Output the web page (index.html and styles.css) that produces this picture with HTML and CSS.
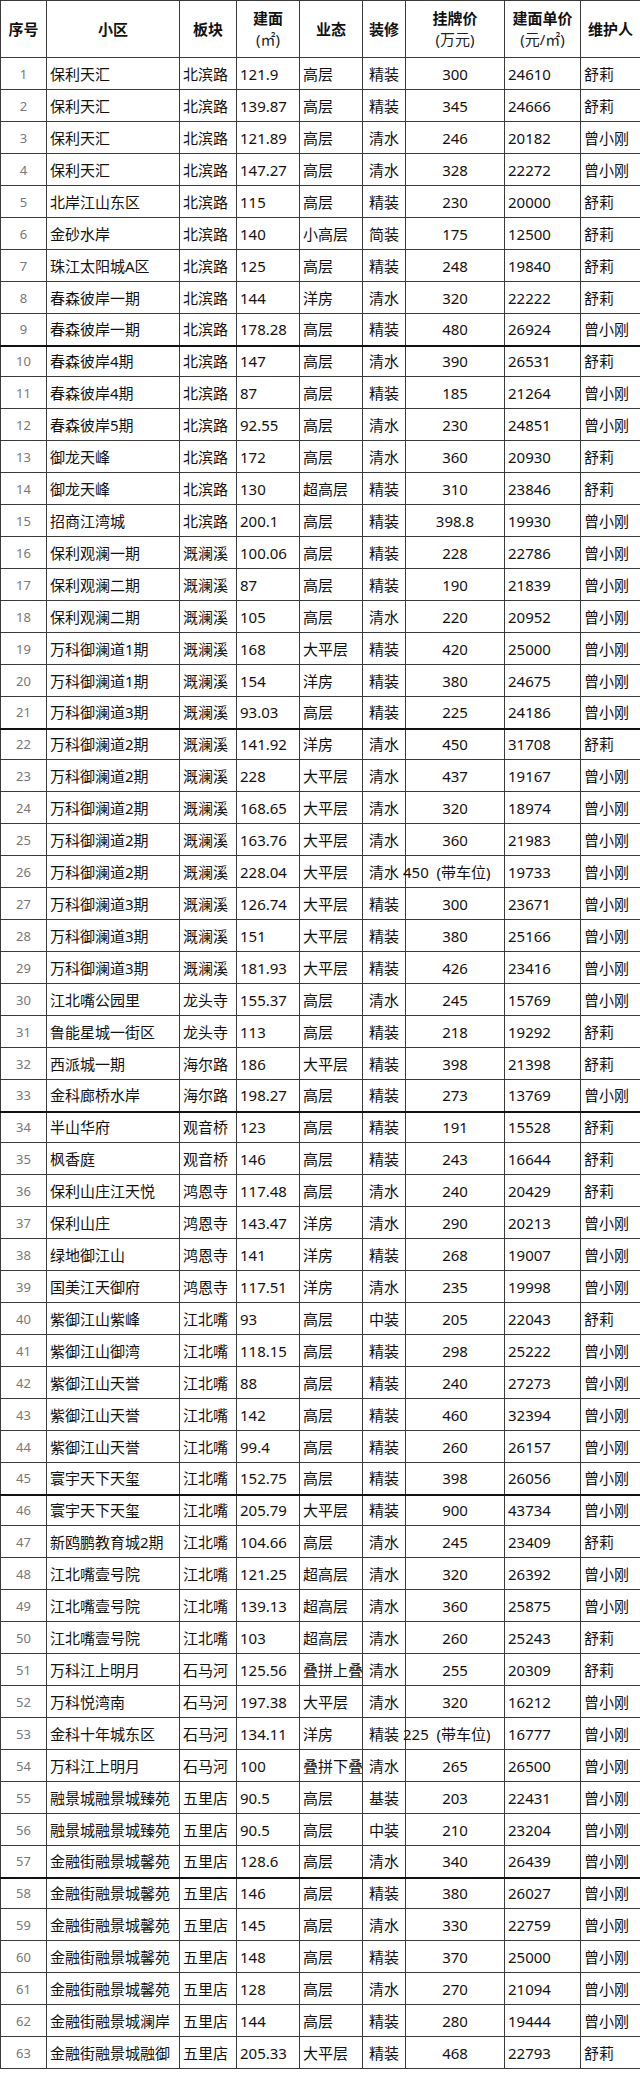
FILE: index.html
```html
<!DOCTYPE html>
<html lang="zh-CN">
<head>
<meta charset="utf-8">
<title>房源表</title>
<link rel="stylesheet" href="styles.css">
</head>
<body>
<table class="sheet">
<colgroup>
<col class="c-no"><col class="c-name"><col class="c-area"><col class="c-size"><col class="c-type"><col class="c-deco"><col class="c-price"><col class="c-unit"><col class="c-agent">
</colgroup>
<thead>
<tr class="head">
<th>序号</th><th>小区</th><th>板块</th>
<th><span class="h1">建面</span><span class="h2">(㎡)</span></th>
<th>业态</th><th>装修</th>
<th><span class="h1">挂牌价</span><span class="h2">(万元)</span></th>
<th><span class="h1">建面单价</span><span class="h2">(元/㎡)</span></th>
<th>维护人</th>
</tr>
</thead>
<tbody>
<tr><td class="no">1</td><td>保利天汇</td><td>北滨路</td><td>121.9</td><td>高层</td><td class="ctr">精装</td><td class="ctr">300</td><td>24610</td><td>舒莉</td></tr>
<tr><td class="no">2</td><td>保利天汇</td><td>北滨路</td><td>139.87</td><td>高层</td><td class="ctr">精装</td><td class="ctr">345</td><td>24666</td><td>舒莉</td></tr>
<tr><td class="no">3</td><td>保利天汇</td><td>北滨路</td><td>121.89</td><td>高层</td><td class="ctr">清水</td><td class="ctr">246</td><td>20182</td><td>曾小刚</td></tr>
<tr><td class="no">4</td><td>保利天汇</td><td>北滨路</td><td>147.27</td><td>高层</td><td class="ctr">清水</td><td class="ctr">328</td><td>22272</td><td>曾小刚</td></tr>
<tr><td class="no">5</td><td>北岸江山东区</td><td>北滨路</td><td>115</td><td>高层</td><td class="ctr">精装</td><td class="ctr">230</td><td>20000</td><td>舒莉</td></tr>
<tr><td class="no">6</td><td>金砂水岸</td><td>北滨路</td><td>140</td><td>小高层</td><td class="ctr">简装</td><td class="ctr">175</td><td>12500</td><td>舒莉</td></tr>
<tr><td class="no">7</td><td>珠江太阳城A区</td><td>北滨路</td><td>125</td><td>高层</td><td class="ctr">精装</td><td class="ctr">248</td><td>19840</td><td>舒莉</td></tr>
<tr><td class="no">8</td><td>春森彼岸一期</td><td>北滨路</td><td>144</td><td>洋房</td><td class="ctr">清水</td><td class="ctr">320</td><td>22222</td><td>舒莉</td></tr>
<tr><td class="no">9</td><td>春森彼岸一期</td><td>北滨路</td><td>178.28</td><td>高层</td><td class="ctr">精装</td><td class="ctr">480</td><td>26924</td><td>曾小刚</td></tr>
<tr class="pb"><td class="no">10</td><td>春森彼岸4期</td><td>北滨路</td><td>147</td><td>高层</td><td class="ctr">清水</td><td class="ctr">390</td><td>26531</td><td>舒莉</td></tr>
<tr><td class="no">11</td><td>春森彼岸4期</td><td>北滨路</td><td>87</td><td>高层</td><td class="ctr">精装</td><td class="ctr">185</td><td>21264</td><td>曾小刚</td></tr>
<tr><td class="no">12</td><td>春森彼岸5期</td><td>北滨路</td><td>92.55</td><td>高层</td><td class="ctr">清水</td><td class="ctr">230</td><td>24851</td><td>曾小刚</td></tr>
<tr><td class="no">13</td><td>御龙天峰</td><td>北滨路</td><td>172</td><td>高层</td><td class="ctr">清水</td><td class="ctr">360</td><td>20930</td><td>舒莉</td></tr>
<tr><td class="no">14</td><td>御龙天峰</td><td>北滨路</td><td>130</td><td>超高层</td><td class="ctr">精装</td><td class="ctr">310</td><td>23846</td><td>舒莉</td></tr>
<tr><td class="no">15</td><td>招商江湾城</td><td>北滨路</td><td>200.1</td><td>高层</td><td class="ctr">精装</td><td class="ctr">398.8</td><td>19930</td><td>曾小刚</td></tr>
<tr><td class="no">16</td><td>保利观澜一期</td><td>溉澜溪</td><td>100.06</td><td>高层</td><td class="ctr">精装</td><td class="ctr">228</td><td>22786</td><td>曾小刚</td></tr>
<tr><td class="no">17</td><td>保利观澜二期</td><td>溉澜溪</td><td>87</td><td>高层</td><td class="ctr">精装</td><td class="ctr">190</td><td>21839</td><td>曾小刚</td></tr>
<tr><td class="no">18</td><td>保利观澜二期</td><td>溉澜溪</td><td>105</td><td>高层</td><td class="ctr">清水</td><td class="ctr">220</td><td>20952</td><td>曾小刚</td></tr>
<tr><td class="no">19</td><td>万科御澜道1期</td><td>溉澜溪</td><td>168</td><td>大平层</td><td class="ctr">精装</td><td class="ctr">420</td><td>25000</td><td>曾小刚</td></tr>
<tr><td class="no">20</td><td>万科御澜道1期</td><td>溉澜溪</td><td>154</td><td>洋房</td><td class="ctr">精装</td><td class="ctr">380</td><td>24675</td><td>曾小刚</td></tr>
<tr><td class="no">21</td><td>万科御澜道3期</td><td>溉澜溪</td><td>93.03</td><td>高层</td><td class="ctr">精装</td><td class="ctr">225</td><td>24186</td><td>曾小刚</td></tr>
<tr class="pb"><td class="no">22</td><td>万科御澜道2期</td><td>溉澜溪</td><td>141.92</td><td>洋房</td><td class="ctr">清水</td><td class="ctr">450</td><td>31708</td><td>舒莉</td></tr>
<tr><td class="no">23</td><td>万科御澜道2期</td><td>溉澜溪</td><td>228</td><td>大平层</td><td class="ctr">清水</td><td class="ctr">437</td><td>19167</td><td>曾小刚</td></tr>
<tr><td class="no">24</td><td>万科御澜道2期</td><td>溉澜溪</td><td>168.65</td><td>大平层</td><td class="ctr">清水</td><td class="ctr">320</td><td>18974</td><td>曾小刚</td></tr>
<tr><td class="no">25</td><td>万科御澜道2期</td><td>溉澜溪</td><td>163.76</td><td>大平层</td><td class="ctr">清水</td><td class="ctr">360</td><td>21983</td><td>曾小刚</td></tr>
<tr><td class="no">26</td><td>万科御澜道2期</td><td>溉澜溪</td><td>228.04</td><td>大平层</td><td class="ctr">清水</td><td class="spill">450&nbsp;&nbsp;(带车位)</td><td>19733</td><td>曾小刚</td></tr>
<tr><td class="no">27</td><td>万科御澜道3期</td><td>溉澜溪</td><td>126.74</td><td>大平层</td><td class="ctr">精装</td><td class="ctr">300</td><td>23671</td><td>曾小刚</td></tr>
<tr><td class="no">28</td><td>万科御澜道3期</td><td>溉澜溪</td><td>151</td><td>大平层</td><td class="ctr">精装</td><td class="ctr">380</td><td>25166</td><td>曾小刚</td></tr>
<tr><td class="no">29</td><td>万科御澜道3期</td><td>溉澜溪</td><td>181.93</td><td>大平层</td><td class="ctr">精装</td><td class="ctr">426</td><td>23416</td><td>曾小刚</td></tr>
<tr><td class="no">30</td><td>江北嘴公园里</td><td>龙头寺</td><td>155.37</td><td>高层</td><td class="ctr">清水</td><td class="ctr">245</td><td>15769</td><td>曾小刚</td></tr>
<tr><td class="no">31</td><td>鲁能星城一街区</td><td>龙头寺</td><td>113</td><td>高层</td><td class="ctr">精装</td><td class="ctr">218</td><td>19292</td><td>舒莉</td></tr>
<tr><td class="no">32</td><td>西派城一期</td><td>海尔路</td><td>186</td><td>大平层</td><td class="ctr">精装</td><td class="ctr">398</td><td>21398</td><td>舒莉</td></tr>
<tr><td class="no">33</td><td>金科廊桥水岸</td><td>海尔路</td><td>198.27</td><td>高层</td><td class="ctr">精装</td><td class="ctr">273</td><td>13769</td><td>曾小刚</td></tr>
<tr class="pb"><td class="no">34</td><td>半山华府</td><td>观音桥</td><td>123</td><td>高层</td><td class="ctr">精装</td><td class="ctr">191</td><td>15528</td><td>舒莉</td></tr>
<tr><td class="no">35</td><td>枫香庭</td><td>观音桥</td><td>146</td><td>高层</td><td class="ctr">精装</td><td class="ctr">243</td><td>16644</td><td>舒莉</td></tr>
<tr><td class="no">36</td><td>保利山庄江天悦</td><td>鸿恩寺</td><td>117.48</td><td>高层</td><td class="ctr">清水</td><td class="ctr">240</td><td>20429</td><td>舒莉</td></tr>
<tr><td class="no">37</td><td>保利山庄</td><td>鸿恩寺</td><td>143.47</td><td>洋房</td><td class="ctr">清水</td><td class="ctr">290</td><td>20213</td><td>曾小刚</td></tr>
<tr><td class="no">38</td><td>绿地御江山</td><td>鸿恩寺</td><td>141</td><td>洋房</td><td class="ctr">精装</td><td class="ctr">268</td><td>19007</td><td>曾小刚</td></tr>
<tr><td class="no">39</td><td>国美江天御府</td><td>鸿恩寺</td><td>117.51</td><td>洋房</td><td class="ctr">清水</td><td class="ctr">235</td><td>19998</td><td>曾小刚</td></tr>
<tr><td class="no">40</td><td>紫御江山紫峰</td><td>江北嘴</td><td>93</td><td>高层</td><td class="ctr">中装</td><td class="ctr">205</td><td>22043</td><td>舒莉</td></tr>
<tr><td class="no">41</td><td>紫御江山御湾</td><td>江北嘴</td><td>118.15</td><td>高层</td><td class="ctr">精装</td><td class="ctr">298</td><td>25222</td><td>曾小刚</td></tr>
<tr><td class="no">42</td><td>紫御江山天誉</td><td>江北嘴</td><td>88</td><td>高层</td><td class="ctr">精装</td><td class="ctr">240</td><td>27273</td><td>曾小刚</td></tr>
<tr><td class="no">43</td><td>紫御江山天誉</td><td>江北嘴</td><td>142</td><td>高层</td><td class="ctr">精装</td><td class="ctr">460</td><td>32394</td><td>曾小刚</td></tr>
<tr><td class="no">44</td><td>紫御江山天誉</td><td>江北嘴</td><td>99.4</td><td>高层</td><td class="ctr">精装</td><td class="ctr">260</td><td>26157</td><td>曾小刚</td></tr>
<tr><td class="no">45</td><td>寰宇天下天玺</td><td>江北嘴</td><td>152.75</td><td>高层</td><td class="ctr">精装</td><td class="ctr">398</td><td>26056</td><td>曾小刚</td></tr>
<tr class="pb"><td class="no">46</td><td>寰宇天下天玺</td><td>江北嘴</td><td>205.79</td><td>大平层</td><td class="ctr">精装</td><td class="ctr">900</td><td>43734</td><td>曾小刚</td></tr>
<tr><td class="no">47</td><td>新鸥鹏教育城2期</td><td>江北嘴</td><td>104.66</td><td>高层</td><td class="ctr">清水</td><td class="ctr">245</td><td>23409</td><td>舒莉</td></tr>
<tr><td class="no">48</td><td>江北嘴壹号院</td><td>江北嘴</td><td>121.25</td><td>超高层</td><td class="ctr">清水</td><td class="ctr">320</td><td>26392</td><td>曾小刚</td></tr>
<tr><td class="no">49</td><td>江北嘴壹号院</td><td>江北嘴</td><td>139.13</td><td>超高层</td><td class="ctr">清水</td><td class="ctr">360</td><td>25875</td><td>曾小刚</td></tr>
<tr><td class="no">50</td><td>江北嘴壹号院</td><td>江北嘴</td><td>103</td><td>超高层</td><td class="ctr">清水</td><td class="ctr">260</td><td>25243</td><td>舒莉</td></tr>
<tr><td class="no">51</td><td>万科江上明月</td><td>石马河</td><td>125.56</td><td>叠拼上叠</td><td class="ctr">清水</td><td class="ctr">255</td><td>20309</td><td>舒莉</td></tr>
<tr><td class="no">52</td><td>万科悦湾南</td><td>石马河</td><td>197.38</td><td>大平层</td><td class="ctr">清水</td><td class="ctr">320</td><td>16212</td><td>曾小刚</td></tr>
<tr><td class="no">53</td><td>金科十年城东区</td><td>石马河</td><td>134.11</td><td>洋房</td><td class="ctr">精装</td><td class="spill">225&nbsp;&nbsp;(带车位)</td><td>16777</td><td>曾小刚</td></tr>
<tr><td class="no">54</td><td>万科江上明月</td><td>石马河</td><td>100</td><td>叠拼下叠</td><td class="ctr">清水</td><td class="ctr">265</td><td>26500</td><td>曾小刚</td></tr>
<tr><td class="no">55</td><td>融景城融景城臻苑</td><td>五里店</td><td>90.5</td><td>高层</td><td class="ctr">基装</td><td class="ctr">203</td><td>22431</td><td>曾小刚</td></tr>
<tr><td class="no">56</td><td>融景城融景城臻苑</td><td>五里店</td><td>90.5</td><td>高层</td><td class="ctr">中装</td><td class="ctr">210</td><td>23204</td><td>曾小刚</td></tr>
<tr><td class="no">57</td><td>金融街融景城馨苑</td><td>五里店</td><td>128.6</td><td>高层</td><td class="ctr">清水</td><td class="ctr">340</td><td>26439</td><td>曾小刚</td></tr>
<tr class="pb"><td class="no">58</td><td>金融街融景城馨苑</td><td>五里店</td><td>146</td><td>高层</td><td class="ctr">精装</td><td class="ctr">380</td><td>26027</td><td>曾小刚</td></tr>
<tr><td class="no">59</td><td>金融街融景城馨苑</td><td>五里店</td><td>145</td><td>高层</td><td class="ctr">清水</td><td class="ctr">330</td><td>22759</td><td>曾小刚</td></tr>
<tr><td class="no">60</td><td>金融街融景城馨苑</td><td>五里店</td><td>148</td><td>高层</td><td class="ctr">精装</td><td class="ctr">370</td><td>25000</td><td>曾小刚</td></tr>
<tr><td class="no">61</td><td>金融街融景城馨苑</td><td>五里店</td><td>128</td><td>高层</td><td class="ctr">清水</td><td class="ctr">270</td><td>21094</td><td>曾小刚</td></tr>
<tr><td class="no">62</td><td>金融街融景城澜岸</td><td>五里店</td><td>144</td><td>高层</td><td class="ctr">精装</td><td class="ctr">280</td><td>19444</td><td>曾小刚</td></tr>
<tr><td class="no">63</td><td>金融街融景城融御</td><td>五里店</td><td>205.33</td><td>大平层</td><td class="ctr">精装</td><td class="ctr">468</td><td>22793</td><td>舒莉</td></tr>
</tbody>
</table>
</body>
</html>
```
FILE: styles.css
```css
html, body {
  margin: 0;
  padding: 0;
  background: #ffffff;
}

.sheet {
  width: 640px;
  border-collapse: collapse;
  table-layout: fixed;
  font-family: "Noto Sans", "Noto Sans CJK SC", sans-serif;
  font-size: 15px;
  color: #111111;
}

.c-no { width: 46px; }
.c-name { width: 133px; }
.c-area { width: 57px; }
.c-size { width: 63px; }
.c-type { width: 63px; }
.c-deco { width: 43px; }
.c-price { width: 99px; }
.c-unit { width: 76px; }
.c-agent { width: 60px; }

.sheet th,
.sheet td {
  border: 1px solid #3a3a3a;
  padding: 0 0 0 3px;
  white-space: nowrap;
  overflow: hidden;
  text-align: left;
  vertical-align: middle;
  line-height: 18px;
}

.sheet tbody tr {
  height: 32px;
}

.sheet tbody tr.pb {
  height: 31px;
}

.sheet tbody tr.pb td {
  border-top: 2px solid #111111;
}

.sheet .head {
  height: 57px;
}

.sheet th {
  text-align: center;
  padding: 0;
  font-weight: 700;
  font-size: 15px;
  color: #111111;
}

.h1,
.h2 {
  display: block;
  line-height: 21px;
}

.h2 {
  font-weight: 400;
  color: #222222;
}

.sheet td.no {
  text-align: center;
  padding: 0;
  font-size: 13px;
  color: #777777;
}

.sheet td.ctr {
  text-align: center;
  padding: 0;
}

.sheet td.spill {
  overflow: visible;
  padding: 0 0 0 0;
  text-indent: -3px;
}
```
